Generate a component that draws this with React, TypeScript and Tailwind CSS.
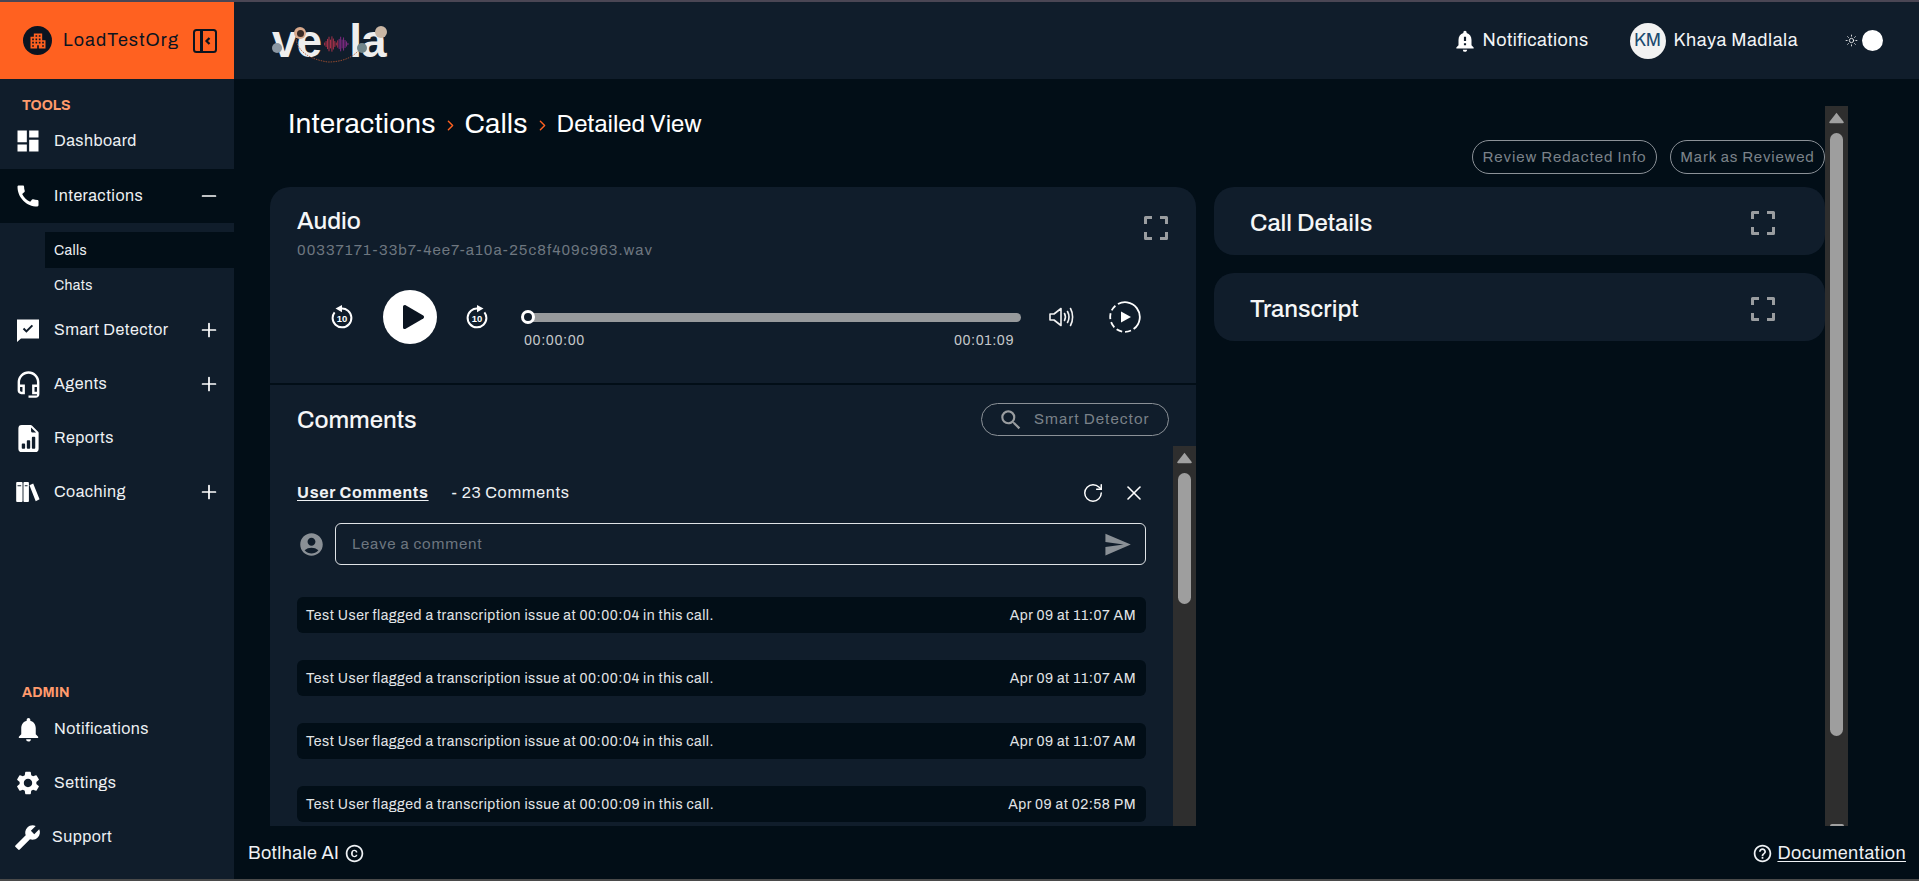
import { ChevronRight, Minus, Plus, RotateCw, Sun, X } from "lucide-react";
import { BsFileEarmarkBarGraphFill } from "react-icons/bs";
import {
  MdAccountCircle,
  MdApartment,
  MdBuild,
  MdCall,
  MdCopyright,
  MdDashboard,
  MdHelpOutline,
  MdNotificationImportant,
  MdNotifications,
  MdOutlineHeadsetMic,
  MdSearch,
  MdSend,
  MdSettings,
} from "react-icons/md";
import type { ReactNode } from "react";

const FONT = "font-['Archivo','Liberation_Sans',Arial,sans-serif]";

function SmartDetectorIcon() {
  return (
    <svg viewBox="0 0 24 24" className="h-[24px] w-[24px]" fill="currentColor">
      <path
        fillRule="evenodd"
        d="M1 1.5h22v19H5L1 24V1.5Zm5.8 9.7 1.4-1.4 2.2 2.2 5.3-5.3 1.4 1.4-6.7 6.7-3.6-3.6Z"
      />
    </svg>
  );
}

function BooksIcon() {
  return (
    <svg viewBox="0 0 26 22" className="h-[20px] w-[26px] shrink-0" fill="currentColor">
      <path
        fillRule="evenodd"
        d="M0 1a1 1 0 0 1 1-1h5a1 1 0 0 1 1 1v20a1 1 0 0 1-1 1H1a1 1 0 0 1-1-1V1Zm1.5 2.5v1.3h4V3.5h-4ZM8 1a1 1 0 0 1 1-1h4a1 1 0 0 1 1 1v20a1 1 0 0 1-1 1H9a1 1 0 0 1-1-1V1Zm1.5 2.5v1.3h3V3.5h-3ZM14.6 3.6l4.1-1.9 7 17.3-4.2 2.2-6.9-17.6Z"
      />
    </svg>
  );
}

function CollapseIcon() {
  return (
    <svg viewBox="0 0 24 24" className="h-[24px] w-[24px]" fill="none" stroke="#0b1420" strokeWidth="2">
      <rect x="1" y="1" width="22" height="22" rx="2.5" />
      <path d="M8.5 1v22" strokeWidth="3" />
      <path d="M16.5 9l-3 3 3 3" strokeWidth="2.2" />
    </svg>
  );
}

function FullscreenIcon() {
  return (
    <svg viewBox="0 0 24 24" className="h-[24px] w-[24px]" fill="none" stroke="#9a9da0" strokeWidth="3" strokeLinejoin="round">
      <path d="M1.5 8V1.5H8M16 1.5h6.5V8M22.5 16v6.5H16M8 22.5H1.5V16" />
    </svg>
  );
}

function VolumeIcon() {
  return (
    <svg viewBox="0 0 26 20" className="h-[20px] w-[26px]" fill="none" stroke="#f2f2f2" strokeWidth="1.6" strokeLinecap="round" strokeLinejoin="round">
      <path d="M1 7v6h4l7 5.5V1.5L5 7H1Z" />
      <path d="M15.5 6.5c1.2 2.2 1.2 4.8 0 7M18.5 4.5c1.8 3.3 1.8 7.7 0 11M21.5 1.5c2.8 5 2.8 12 0 17" />
    </svg>
  );
}

function DashedPlayIcon() {
  return (
    <svg viewBox="0 0 32 32" className="h-[32px] w-[32px]">
      <circle cx="16" cy="16" r="14.8" fill="none" stroke="#fff" strokeWidth="1.8" strokeDasharray="35 3 6 3 6 3 6 3 6 3 6 3" transform="rotate(-82 16 16)" />
      <path d="M12 10.5 22 16l-10 5.5v-11Z" fill="#fff" />
    </svg>
  );
}

// skip back / forward 10s: same ring, mirrored, the label stays readable
function SkipIcon({ forward }: { forward?: boolean }) {
  return (
    <svg viewBox="0 0 24 24" className="h-[24px] w-[24px]">
      <g transform={forward ? "translate(24 0) scale(-1 1)" : undefined}>
        <path d="M11 3.6a9.4 9.4 0 1 1-8.4 9.4c0-2.2.7-4.1 2-5.7" fill="none" stroke="#fff" strokeWidth="2" />
        <path d="M12 0v7.2L5.5 3.6 12 0Z" fill="#fff" />
      </g>
      <text x="12" y="16.6" textAnchor="middle" fontSize="9.5" fontWeight="700" fill="#fff" fontFamily="Liberation Sans, Arial, sans-serif">
        10
      </text>
    </svg>
  );
}

function Logo() {
  const bars = [4, 8, 14, 20, 12, 21, 15, 8, 4, 10, 14, 20, 12, 18, 11, 7, 3];
  return (
    <div className="relative flex h-[46px] w-[118px] items-center font-['Liberation_Sans',Arial,sans-serif] text-[46px] font-bold leading-none tracking-[-1px] text-[#eeeeee]">
      <span>ve</span>
      <svg viewBox="0 0 34 22" className="ml-[3px] mt-[6px] h-[16px] w-[25px] shrink-0">
        {bars.map((h, i) => (
          <rect key={i} x={i * 2} y={11 - h / 2} width="1.4" height={h} fill={i < 10 ? "#a8324a" : "#7d2a80"} />
        ))}
      </svg>
      <span>la</span>
      <span className="absolute left-[22px] top-[9px] h-[12px] w-[12px] rounded-full bg-[#d8a98c]">
        <span className="ml-[3px] mt-[3px] block h-[7px] w-[7px] rounded-full bg-[#3a2a25]" />
      </span>
      <span className="absolute left-0 top-[25px] h-[10px] w-[10px] rounded-full bg-[#8b97a3]" />
      <span className="absolute left-[85px] top-[25px] h-[10px] w-[10px] rounded-full bg-[#70858a]" />
      <span className="absolute left-[103px] top-[8px] h-[12px] w-[12px] rounded-full bg-[#c9b6a4]" />
      <svg viewBox="0 0 65 24" className="absolute left-[24px] top-[21px] h-[24px] w-[65px]" fill="none" stroke="#b4552f" strokeWidth="0.8" strokeDasharray="1.5 1">
        <path d="M0 0c2 12 12 20 32 23 11 0 23-3 30-11" />
      </svg>
    </div>
  );
}

function NavRow({
  icon,
  label,
  expand,
  active,
  gapClass = "pl-[54px]",
}: {
  icon: ReactNode;
  label: string;
  expand?: "plus" | "minus";
  active?: boolean;
  gapClass?: string;
}) {
  return (
    <div className={`relative flex h-[54px] shrink-0 items-center pr-[14px] text-[16px] tracking-[0.45px] text-[#eef1f4] ${gapClass} ${active ? "bg-[#020e17]" : ""}`}>
      <span className="absolute left-[16px] flex h-[26px] w-[24px] items-center justify-center text-white [&>svg]:shrink-0">{icon}</span>
      <span className="flex-1">{label}</span>
      {expand === "plus" && <Plus size={22} strokeWidth={1.9} className="text-white" />}
      {expand === "minus" && <Minus size={22} strokeWidth={1.9} className="text-white" />}
    </div>
  );
}

function Sidebar() {
  return (
    <aside className="flex w-[234px] shrink-0 flex-col bg-[#101d2b]">
      <div className="flex h-[77px] shrink-0 items-center bg-[#ff6120] pl-[23px]">
        <span className="flex h-[29px] w-[29px] items-center justify-center rounded-full bg-[#0b1420] text-[#ff6120]">
          <MdApartment size={20} />
        </span>
        <span className="ml-[11px] text-[18px] tracking-[1.1px] text-[#0b1420]">LoadTestOrg</span>
        <span className="ml-[14px] flex"><CollapseIcon /></span>
      </div>
      <div className="flex h-[35px] shrink-0 items-end pl-[22px] text-[14px] font-bold leading-[16px] text-[#ff9a6c]">TOOLS</div>
      <NavRow icon={<MdDashboard size={28} />} label="Dashboard" />
      <div className="h-[1px] shrink-0" />
      <NavRow icon={<MdCall size={28} />} label="Interactions" expand="minus" active />
      <div className="flex flex-col pl-[45px] pt-[9px] text-[14px] tracking-[0.35px] text-[#eef1f4]">
        <div className="flex h-[36px] items-center bg-[#020e17] pl-[9px]">Calls</div>
        <div className="flex h-[35px] items-center pl-[9px]">Chats</div>
      </div>
      <NavRow icon={<SmartDetectorIcon />} label="Smart Detector" expand="plus" />
      <NavRow icon={<MdOutlineHeadsetMic size={29} />} label="Agents" expand="plus" />
      <NavRow icon={<BsFileEarmarkBarGraphFill size={27} />} label="Reports" />
      <NavRow icon={<BooksIcon />} label="Coaching" expand="plus" />
      <div className="mt-auto flex h-[18px] shrink-0 items-center pl-[22px] text-[14px] font-bold text-[#ff9a6c]">ADMIN</div>
      <div className="h-[1px] shrink-0" />
      <NavRow icon={<MdNotifications size={29} />} label="Notifications" />
      <NavRow icon={<MdSettings size={28} />} label="Settings" />
      <NavRow icon={<MdBuild size={27} className="-ml-[2px] -scale-x-100" />} label="Support" gapClass="pl-[52px]" />
      <div className="h-[15px] shrink-0" />
    </aside>
  );
}

function TopBar() {
  return (
    <header className="flex h-[77px] shrink-0 items-center bg-[#101d2b] pl-[38px] pr-[36px]">
      <Logo />
      <div className="ml-auto flex items-center text-[18px] tracking-[0.45px] text-[#f2f4f6]">
        <MdNotificationImportant size={26} className="text-white" />
        <span className="ml-[5px]">Notifications</span>
        <span className="ml-[41px] flex h-[36px] w-[36px] items-center justify-center rounded-full bg-[#f2f2f2] text-[18px] tracking-normal text-[#1c4a70]">KM</span>
        <span className="ml-[8px] tracking-[0.55px]">Khaya Madlala</span>
        <Sun size={13} strokeWidth={1.5} className="ml-[47px] text-white" />
        <span className="ml-[4px] h-[21px] w-[21px] rounded-full bg-white" />
      </div>
    </header>
  );
}

function Scrollbar({ thumbTop, thumbHeight, endArrow }: { thumbTop: string; thumbHeight: string; endArrow?: boolean }) {
  return (
    <div className="flex w-[23px] shrink-0 flex-col items-center overflow-hidden bg-[#2e2e2e]">
      <svg viewBox="0 0 16 12" className="mt-[6px] h-[12px] w-[15px] shrink-0" fill="#a0a0a0">
        <path d="M8 .5 15.5 10a1 1 0 0 1-.8 1.5H1.3A1 1 0 0 1 .5 10L8 .5Z" />
      </svg>
      <div className={`w-[13px] shrink-0 rounded-full bg-[#9e9e9e] ${thumbTop} ${thumbHeight}`} />
      {endArrow && <div className="mt-auto h-[2px] w-[14px] rounded-t-sm bg-[#a0a0a0]" />}
    </div>
  );
}

function Pill({ children, className }: { children: ReactNode; className: string }) {
  return (
    <span className={`flex h-[34px] items-center justify-center rounded-full border border-[#8b9197] text-[15px] text-[#7b8289] ${className}`}>
      {children}
    </span>
  );
}

function Player() {
  return (
    <div className="flex items-start pl-[59px] pt-[28px]">
      <span className="mt-[14px] flex h-[26px] w-[26px] items-center justify-center"><SkipIcon /></span>
      <span className="ml-[28px] flex h-[54px] w-[54px] items-center justify-center rounded-full bg-white text-[#0b1420]">
        <svg viewBox="0 0 24 24" className="ml-[2px] h-[32px] w-[32px]" fill="currentColor">
          <path d="M6 4.2c0-1 1.1-1.6 2-1.1l13.2 7.8c.8.5.8 1.7 0 2.2L8 20.9c-.9.5-2-.1-2-1.1V4.2Z" />
        </svg>
      </span>
      <span className="ml-[27px] mt-[14px] flex h-[26px] w-[26px] items-center justify-center"><SkipIcon forward /></span>
      <div className="ml-[31px] mt-[21px] w-[500px]">
        <div className="relative flex h-[12px] items-center">
          <div className="ml-[6px] h-[9px] flex-1 rounded-r-full bg-[#979a9c]" />
          <span className="absolute left-0 h-[14px] w-[14px] rounded-full border-[3px] border-white bg-[#101d2b]" />
        </div>
        <div className="mt-[7px] flex justify-between pl-[3px] pr-[7px] text-[14px] tracking-[0.55px] text-[#c5c8ca]">
          <span>00:00:00</span>
          <span>00:01:09</span>
        </div>
      </div>
      <span className="ml-[28px] mt-[17px] flex"><VolumeIcon /></span>
      <span className="ml-[34px] mt-[11px] flex"><DashedPlayIcon /></span>
    </div>
  );
}

function CommentRow({ time, at }: { time: string; at: string }) {
  return (
    <div className="flex h-[36px] shrink-0 items-center justify-between rounded-[6px] bg-[#020e17] pl-[9px] pr-[10px] text-[14px] tracking-[0.5px] text-[#e2e5e7]">
      <span>Test User flagged a transcription issue at {at} in this call.</span>
      <span>{time}</span>
    </div>
  );
}

function AudioCard() {
  return (
    <section className="flex h-[639px] w-[926px] shrink-0 flex-col overflow-hidden rounded-t-[20px] bg-[#101d2b]">
      <div className="h-[198px] shrink-0 border-b-2 border-[#020e17]">
        <div className="flex items-start pl-[27px] pr-[28px] pt-[20px]">
          <div className="flex-1">
            <h2 className="text-[24px] font-medium leading-[28px] text-[#f5f6f7]">Audio</h2>
            <p className="mt-[3px] text-[15px] leading-[24px] tracking-[1.03px] text-[#6e7780]">00337171-33b7-4ee7-a10a-25c8f409c963.wav</p>
          </div>
          <span className="mt-[9px] flex"><FullscreenIcon /></span>
        </div>
        <Player />
      </div>

      <div className="flex h-[61px] shrink-0 items-center justify-between pl-[27px] pr-[27px] pt-[8px]">
        <h2 className="text-[24px] font-medium text-[#f5f6f7]">Comments</h2>
        <span className="flex h-[33px] w-[188px] items-center rounded-full border border-[#8b9197] pl-[16px] text-[15px] tracking-[1px] text-[#7b8289]">
          <MdSearch size={26} className="text-[#9a9da0]" />
          <span className="ml-[10px]">Smart Detector</span>
        </span>
      </div>

      <div className="flex min-h-0 flex-1">
        <div className="flex min-w-0 flex-1 flex-col overflow-hidden pl-[27px] pr-[27px]">
          <div className="mt-[33px] flex h-[28px] shrink-0 items-center text-[16px] text-[#eef1f4]">
            <span className="font-bold tracking-[0.7px] underline underline-offset-2">User Comments</span>
            <span className="ml-[23px] tracking-[0.68px]">- 23 Comments</span>
            <RotateCw size={22} strokeWidth={1.6} className="ml-auto text-white" />
            <X size={24} strokeWidth={1.6} className="ml-[18px] text-white" />
          </div>
          <div className="mt-[16px] flex shrink-0 items-center">
            <MdAccountCircle size={27} className="ml-[1px] text-[#8a9096]" />
            <div className="ml-[10px] flex h-[42px] flex-1 items-center justify-between rounded-[6px] border border-[#dfe3e6] pl-[16px] pr-[13px] text-[15px] tracking-[0.85px] text-[#6e7780]">
              <span>Leave a comment</span>
              <MdSend size={29} className="text-[#8a9096]" />
            </div>
          </div>
          <div className="mt-[32px] flex flex-col gap-[27px]">
            <CommentRow at="00:00:04" time="Apr 09 at 11:07 AM" />
            <CommentRow at="00:00:04" time="Apr 09 at 11:07 AM" />
            <CommentRow at="00:00:04" time="Apr 09 at 11:07 AM" />
            <CommentRow at="00:00:09" time="Apr 09 at 02:58 PM" />
          </div>
        </div>
        <Scrollbar thumbTop="mt-[9px]" thumbHeight="h-[131px]" />
      </div>
    </section>
  );
}

function SideCard({ title }: { title: string }) {
  return (
    <section className="flex h-[68px] items-center justify-between rounded-[20px] bg-[#101d2b] pl-[36px] pr-[50px] pt-[4px]">
      <h2 className="text-[24px] font-medium text-[#f5f6f7]">{title}</h2>
      <FullscreenIcon />
    </section>
  );
}

function Crumb() {
  return <ChevronRight size={17} strokeWidth={2} className="mx-[6px] mt-[2px] text-[#ff6120]" />;
}

function Content() {
  return (
    <div className="ml-[36px] mr-[71px] mt-[27px] flex min-h-0 flex-1">
      <div className="flex w-[1555px] min-w-0 flex-col">
        <div className="flex h-[34px] shrink-0 items-center pl-[18px] pt-[2px] text-white">
          <span className="text-[28px] tracking-[0.1px]">Interactions</span>
          <Crumb />
          <span className="text-[28px] tracking-[0.1px]">Calls</span>
          <Crumb />
          <span className="text-[24px]">Detailed View</span>
        </div>
        <div className="flex h-[34px] shrink-0 justify-end gap-[13px]">
          <Pill className="w-[185px] tracking-[0.95px]">Review Redacted Info</Pill>
          <Pill className="w-[155px] tracking-[0.85px]">Mark as Reviewed</Pill>
        </div>
        <div className="mt-[13px] flex min-h-0 flex-1 gap-[18px] overflow-hidden">
          <AudioCard />
          <div className="flex flex-1 flex-col gap-[18px]">
            <SideCard title="Call Details" />
            <SideCard title="Transcript" />
          </div>
        </div>
      </div>
      <Scrollbar thumbTop="mt-[9px]" thumbHeight="h-[603px]" endArrow />
    </div>
  );
}

function Footer() {
  return (
    <footer className="flex h-[53px] shrink-0 items-center pl-[14px] pr-[13px] pt-[2px] text-[18px] tracking-[0.4px] text-[#eef1f4]">
      <span>Botlhale AI</span>
      <MdCopyright size={21} className="ml-[5px]" />
      <MdHelpOutline size={21} className="ml-auto" />
      <span className="ml-[4px] underline underline-offset-2">Documentation</span>
    </footer>
  );
}

export default function App() {
  return (
    <div className={`flex h-screen flex-col overflow-hidden bg-[#020e17] ${FONT}`}>
      <div className="h-[2px] shrink-0 bg-[#4a4654]" />
      <div className="flex min-h-0 flex-1">
        <Sidebar />
        <main className="flex min-w-0 flex-1 flex-col">
          <TopBar />
          <Content />
          <Footer />
        </main>
      </div>
      <div className="h-[2px] shrink-0 bg-[#4a4a4a]" />
    </div>
  );
}
